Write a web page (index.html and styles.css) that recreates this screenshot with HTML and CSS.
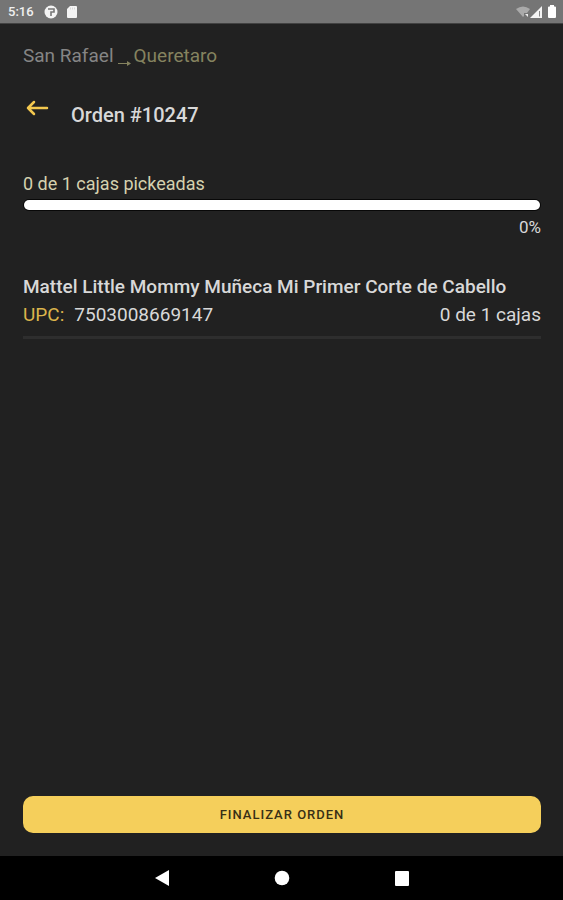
FILE: index.html
```html
<!DOCTYPE html>
<html lang="es">
<head>
<meta charset="utf-8">
<meta name="viewport" content="width=device-width, initial-scale=1">
<title>Orden #10247</title>
<link rel="stylesheet" href="styles.css">
</head>
<body>
<header class="status">
  <span class="clock">5:16</span>
  <svg class="status-app" width="14" height="14" viewBox="0 0 14 14" aria-hidden="true"><circle cx="7" cy="7" r="6.5" fill="#f4f4f4"/><path d="M4 4H10V7H7V11" fill="none" stroke="#777" stroke-width="1.600"/></svg>
  <svg width="12" height="14" viewBox="0 0 12 14" aria-hidden="true"><path d="M4 1H10Q11 1 11 2V12Q11 13 10 13H2Q1 13 1 12V4Z" fill="#f4f4f4"/><path d="M4.5 2.5V4.500M6.500 2.500V4.500M8.500 2.500V4.500" stroke="#ccc" stroke-width=".7"/></svg>
  <span class="status-right">
    <svg width="14" height="14" viewBox="0 0 14 14" aria-hidden="true"><path d="M0 4Q7 -1 14 4L11 8H8V11L7 12Z" fill="#aaa"/><path d="M9 9H12V12Z" fill="#eee"/></svg>
    <svg width="13" height="14" viewBox="0 0 13 14" aria-hidden="true"><path d="M12 1V13H0Z" fill="#f4f4f4"/><path d="M9.500 6V11.500" stroke="#888" stroke-width="1"/></svg>
    <svg class="battery" width="10" height="14" viewBox="0 0 10 14" aria-hidden="true"><path d="M3 0H7V1.500H8Q9 1.500 9 2.500V12Q9 13 8 13H2Q1 13 1 12V2.500Q1 1.500 2 1.500H3Z" fill="#fff"/></svg>
  </span>
</header>
<main class="screen">
  <p class="route"><span>San Rafael</span><svg width="13" height="6" viewBox="0 0 13 6" aria-hidden="true"><path d="M0 3.500H11" fill="none" stroke="#85835f" stroke-width="1"/><path d="M9 1L13 3.500L9 6Z" fill="#85835f"/></svg><span class="destination">Queretaro</span></p>
  <div class="heading">
    <button class="back" type="button" aria-label="Volver"><svg width="24" height="16" viewBox="0 0 24 16" aria-hidden="true"><path d="M22 8H3M9 2L3 8L9 14" fill="none" stroke="#f3c84f" stroke-width="2.500" stroke-linecap="round" stroke-linejoin="round"/></svg></button>
    <h1>Orden #10247</h1>
  </div>
  <section class="progress-block">
    <label for="picked">0 de 1 cajas pickeadas</label>
    <progress id="picked" value="0" max="1"></progress>
    <span class="percent">0%</span>
  </section>
  <article class="item">
    <h2>Mattel Little Mommy Muñeca Mi Primer Corte de Cabello</h2>
    <div class="item-row">
      <span class="upc">UPC:</span>
      <span>7503008669147</span>
      <span class="count">0 de 1 cajas</span>
    </div>
  </article>
  <button class="finish" type="button">FINALIZAR ORDEN</button>
</main>
<nav class="system">
  <button type="button" aria-label="Atrás"><svg width="16" height="16" viewBox="0 0 16 16"><path d="M15 0V16L1 8Z" fill="#fff"/></svg></button>
  <button type="button" aria-label="Inicio"><svg width="16" height="16" viewBox="0 0 16 16"><circle cx="8" cy="8" r="7.300" fill="#fff"/></svg></button>
  <button type="button" aria-label="Recientes"><svg width="16" height="16" viewBox="0 0 16 16"><rect x="1" y="1" width="14" height="15" rx="1" fill="#fff"/></svg></button>
</nav>
</body>
</html>
```
FILE: styles.css
```css
* { box-sizing: border-box; }
body {
  margin: 0;
  min-height: 100vh;
  display: flex;
  flex-direction: column;
  background: #212121;
  color: #d8d8d8;
  font: 19px/24px Roboto, sans-serif;
}
h1, h2, p { margin: 0; }
button {
  border: 0;
  padding: 0;
  background: none;
  font: inherit;
}
svg { display: block; flex: none; }
.status {
  height: 24px;
  display: flex;
  align-items: center;
  padding: 0 6px 0 8px;
  background: #757575;
  border-bottom: 1px solid #424242;
  color: #f0f0f0;
}
.clock { font-size: 13px; font-weight: 500; }
.status-app { margin: 0 8px 0 10px; }
.status-right { display: flex; margin-left: auto; }
.battery { margin-left: 4px; }
.screen {
  flex: 1;
  display: flex;
  flex-direction: column;
  padding: 20px 22px 23px 23px;
}
.route { display: flex; align-items: flex-end; color: #858585; }
.route svg { margin: 0 3px 2px 4px; }
.destination { color: #85835f; }
.heading {
  display: flex;
  margin-top: 32px;
  gap: 21px;
}
.back { height: 16px; width: 27px; padding-left: 2px; }
h1, h2 { line-height: 24px; font-weight: 500; }
h1 { margin-top: 3px; font-size: 20px; }
h2 { font-size: 19px; }
.progress-block {
  display: flex;
  flex-direction: column;
  margin-top: 45px;
  color: #d5d1af;
  font-size: 18px;
}
progress {
  appearance: none;
  width: 100%;
  height: 12px;
  margin-top: 3px;
  border: 1px solid #080808;
  border-radius: 6px;
  overflow: hidden;
  background: #fff;
}
progress::-webkit-progress-bar { background: #fff; }
progress::-webkit-progress-value { background: #f5cf5b; }
.percent {
  align-self: flex-end;
  margin-top: 4px;
  color: #d8d8d8;
  font-size: 17px;
}
.item {
  margin-top: 36px;
  padding-bottom: 9px;
  border-bottom: 3px solid #2e2e2e;
}
.item-row { display: flex; gap: 10px; margin-top: 4px; }
.upc { color: #dcb54c; }
.count { margin-left: auto; }
.finish {
  height: 37px;
  margin-top: auto;
  border-radius: 10px;
  background: #f5cf5b;
  color: #382f16;
  font-size: 13px;
  font-weight: 500;
  letter-spacing: 1px;
}
.system {
  height: 44px;
  display: flex;
  align-items: center;
  justify-content: center;
  gap: 104px;
  background: #000;
}
```
